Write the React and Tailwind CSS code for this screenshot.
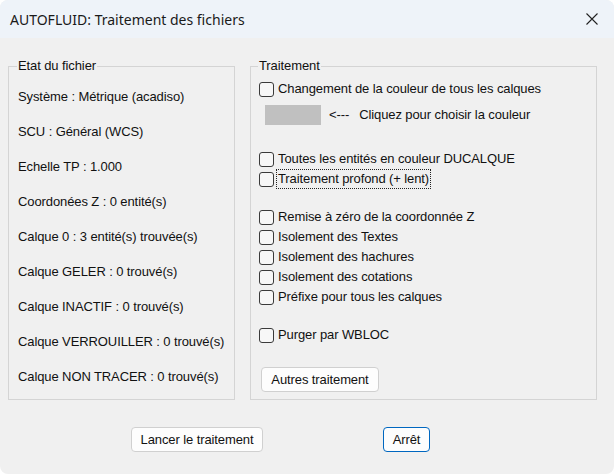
const etat = [
  'Système : Métrique (acadiso)',
  'SCU : Général (WCS)',
  'Echelle TP : 1.000',
  'Coordonées Z : 0 entité(s)',
  'Calque 0 : 3 entité(s) trouvée(s)',
  'Calque GELER : 0 trouvé(s)',
  'Calque INACTIF : 0 trouvé(s)',
  'Calque VERROUILLER : 0 trouvé(s)',
  'Calque NON TRACER : 0 trouvé(s)',
]

function Check({ label, focused, className = '' }) {
  return (
    <label className={`flex items-center h-[20px] ${className}`}>
      <span className="w-[15px] h-[15px] rounded-[3px] border border-[#3a3a3a] bg-[#f7f7f7] shrink-0" />
      <span
        className={`ml-[3px] leading-[18px] px-[1px] ${
          focused ? 'outline outline-1 outline-dotted outline-[#222]' : ''
        }`}
      >
        {label}
      </span>
    </label>
  )
}

export default function App() {
  return (
    <div
      className="w-[614px] h-[475px] bg-white text-[13px] text-[#111] tracking-[-0.1px]"
      style={{ fontFamily: '"Liberation Sans", Arial, sans-serif' }}
    >
      <div className="h-[474px] rounded-[8px] overflow-hidden bg-[#f0f0f0] flex flex-col">
        {/* Title bar */}
        <div className="h-[38px] bg-[#eef3f9] flex items-center justify-between pl-[10px] pr-[16px]">
          <span className="text-[14px] tracking-normal text-[#1a1a1a] font-['Noto_Sans',sans-serif]">
            AUTOFLUID: Traitement des fichiers
          </span>
          <svg width="12" height="12" viewBox="0 0 12 12" className="mb-[1px]">
            <path d="M0.5 0.5L11.5 11.5M11.5 0.5L0.5 11.5" stroke="#222" strokeWidth="1.1" />
          </svg>
        </div>

        {/* Group boxes */}
        <div className="flex gap-[15px] px-[8px] pt-[19px]">
          <fieldset className="w-[227px] h-[343px] border border-[#d4d4d4]">
            <legend className="ml-[8px] px-[1px] leading-[18px]">Etat du fichier</legend>
            <div className="flex flex-col pt-[4px] pl-[9px]">
              {etat.map((t) => (
                <div key={t} className="h-[35px] flex items-center">
                  {t}
                </div>
              ))}
            </div>
          </fieldset>

          <fieldset className="w-[347px] h-[343px] border border-[#d4d4d4]">
            <legend className="ml-[7px] px-[1px] leading-[18px]">Traitement</legend>
            <div className="flex flex-col pt-[4px] pl-[8px]">
              <Check label="Changement de la couleur de tous les calques" />
              <div className="flex items-center mt-[6px] pl-[6px]">
                <div className="w-[56px] h-[20px] bg-[#c0c0c0]" />
                <span className="ml-[8px]">&lt;---</span>
                <span className="ml-[10px]">Cliquez pour choisir la couleur</span>
              </div>
              <Check className="mt-[24px]" label="Toutes les entités en couleur DUCALQUE" />
              <Check label="Traitement profond (+ lent)" focused />
              <Check className="mt-[18px]" label="Remise à zéro de la coordonnée Z" />
              <Check label="Isolement des Textes" />
              <Check label="Isolement des hachures" />
              <Check label="Isolement des cotations" />
              <Check label="Préfixe pour tous les calques" />
              <Check className="mt-[18px]" label="Purger par WBLOC" />
              <button className="mt-[22px] ml-[2px] w-[118px] h-[25px] bg-[#fdfdfd] border border-[#d0d0d0] rounded-[4px] text-[13px]">
                Autres traitement
              </button>
            </div>
          </fieldset>
        </div>

        {/* Bottom buttons */}
        <div className="flex mt-[27px] pl-[131px]">
          <button className="w-[132px] h-[25px] bg-[#fdfdfd] border border-[#d0d0d0] rounded-[4px]">
            Lancer le traitement
          </button>
          <button className="ml-[120px] w-[47px] h-[25px] bg-[#fdfdfd] border border-[#0067c0] rounded-[4px]">
            Arrêt
          </button>
        </div>
      </div>
    </div>
  )
}
